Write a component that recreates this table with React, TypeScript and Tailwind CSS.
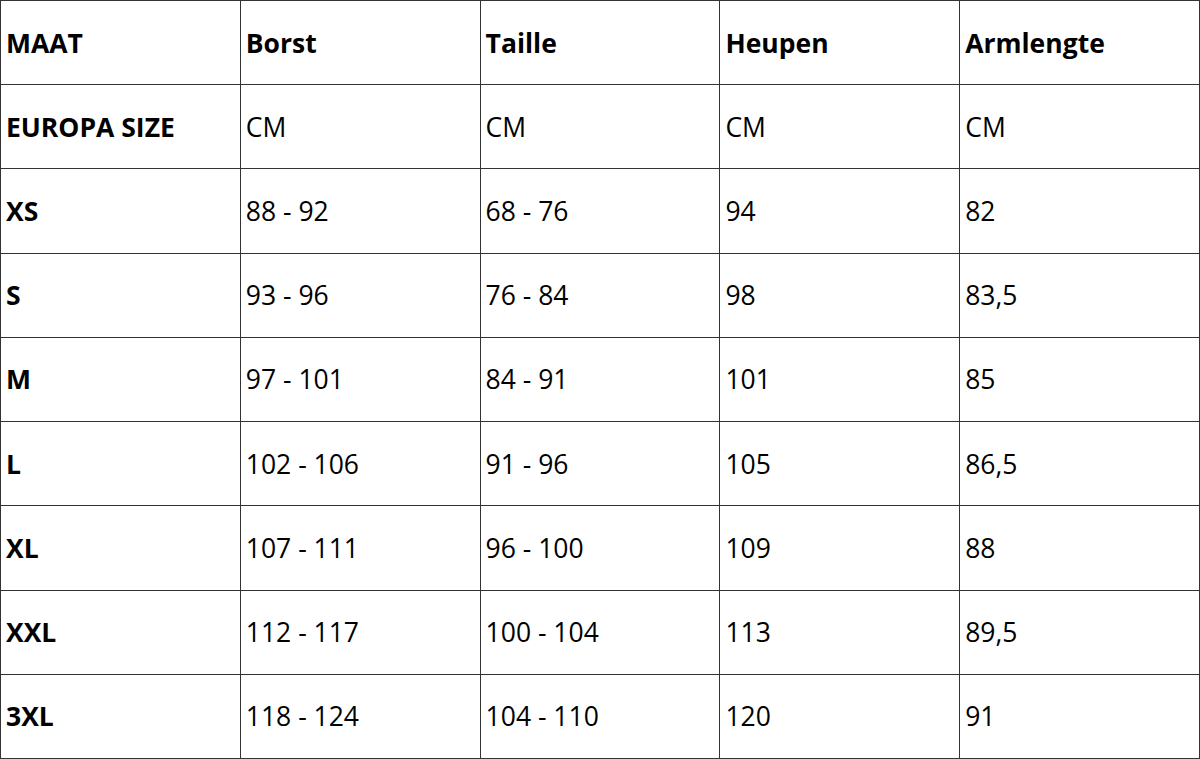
const HEADER = ["MAAT", "Borst", "Taille", "Heupen", "Armlengte"];

const ROWS = [
  ["EUROPA SIZE", "CM", "CM", "CM", "CM"],
  ["XS", "88 - 92", "68 - 76", "94", "82"],
  ["S", "93 - 96", "76 - 84", "98", "83,5"],
  ["M", "97 - 101", "84 - 91", "101", "85"],
  ["L", "102 - 106", "91 - 96", "105", "86,5"],
  ["XL", "107 - 111", "96 - 100", "109", "88"],
  ["XXL", "112 - 117", "100 - 104", "113", "89,5"],
  ["3XL", "118 - 124", "104 - 110", "120", "91"],
];

export default function App() {
  return (
    <div className="w-[1200px] h-[759px] bg-white font-['Open_Sans',sans-serif] text-black">
      <table className="w-[1200px] h-[759px] table-fixed border-collapse">
        <tbody>
          <tr>
            {HEADER.map((h) => (
              <td key={h} className="border border-[#333] px-[5px] text-[26.5px] leading-[36px] font-bold align-middle">
                {h}
              </td>
            ))}
          </tr>
          {ROWS.map((row) => (
            <tr key={row[0]}>
              {row.map((cell, i) => (
                <td
                  key={i}
                  className={`border border-[#333] px-[5px] text-[26.5px] leading-[36px] align-middle ${i === 0 ? "font-bold" : ""}`}
                >
                  {cell}
                </td>
              ))}
            </tr>
          ))}
        </tbody>
      </table>
    </div>
  );
}
